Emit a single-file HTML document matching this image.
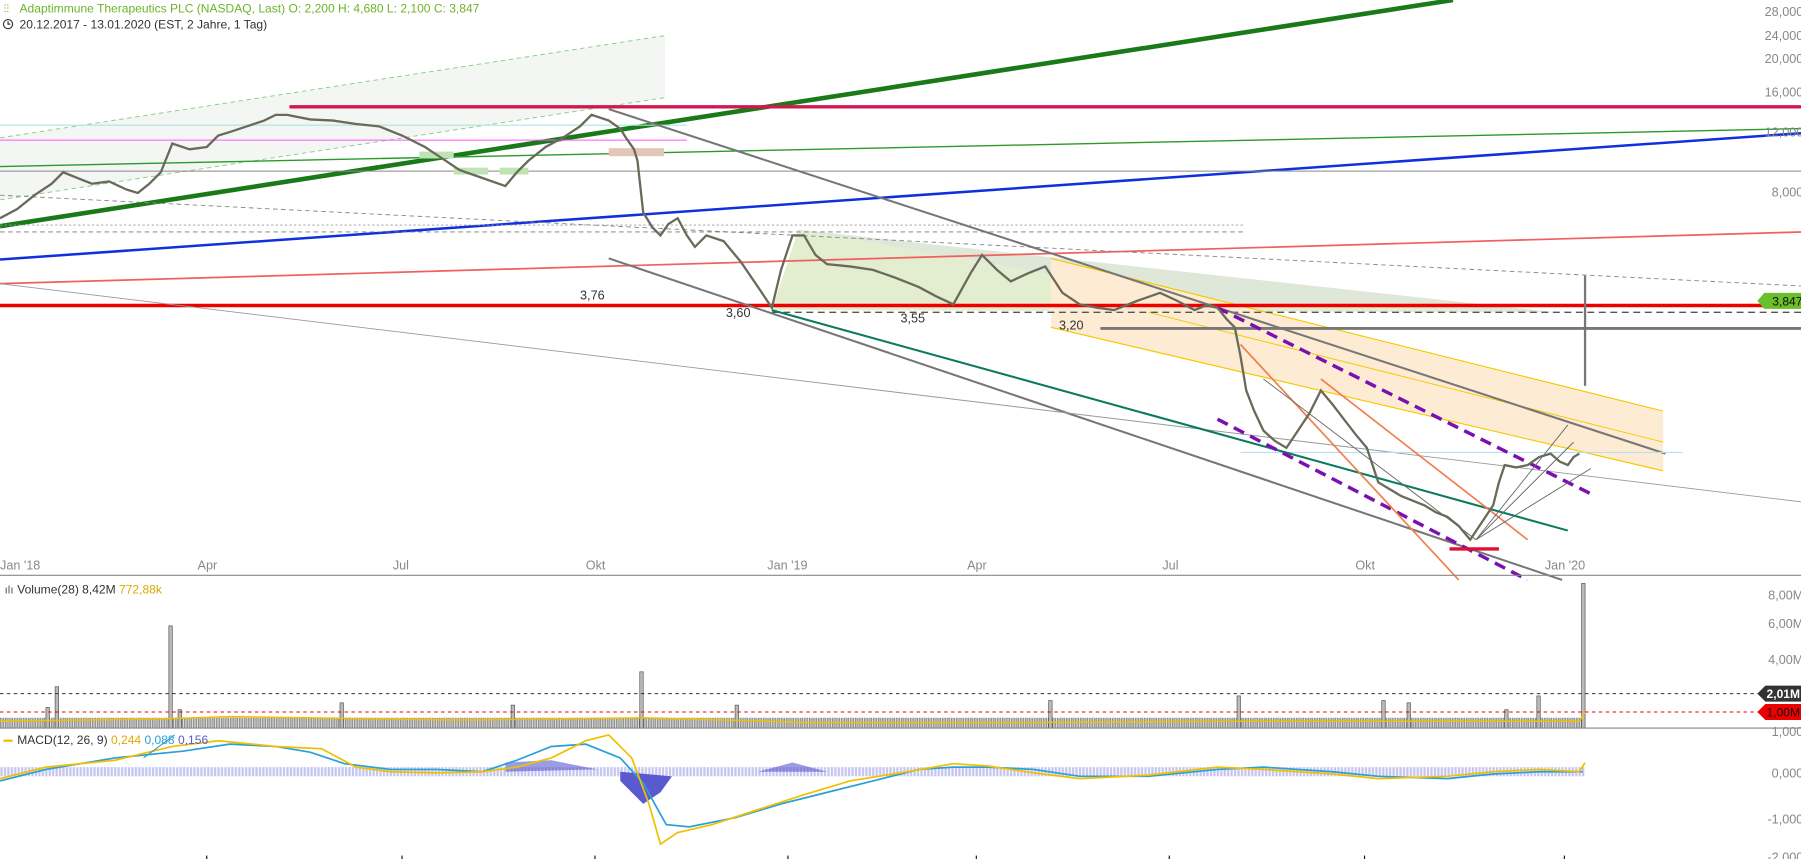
<!DOCTYPE html>
<html><head><meta charset="utf-8"><style>
html,body{margin:0;padding:0;background:#fff;overflow:hidden}
svg{display:block}
text{font-family:"Liberation Sans",Arial,sans-serif}
</style></head><body>
<svg width="1801" height="859" viewBox="0 0 1568 748" preserveAspectRatio="none" xmlns="http://www.w3.org/2000/svg">
<defs>
<pattern id="vb" width="4" height="20" patternUnits="userSpaceOnUse"><rect x="0.5" y="0" width="2.6" height="20" fill="#bbb" stroke="#555" stroke-width="0.5"/></pattern>
<pattern id="mh" width="3" height="20" patternUnits="userSpaceOnUse"><rect x="0.3" y="0" width="2" height="20" fill="#5a5ad0"/></pattern>
</defs>
<rect width="1568" height="748" fill="#fff"/>
<polygon points="0,120 579,31 579,85 0,174" fill="#f4f6f4"/>
<line x1="0" y1="120" x2="579" y2="31" stroke="#8c8" stroke-width="0.8" stroke-dasharray="4,3"/>
<line x1="0" y1="174" x2="579" y2="85" stroke="#8c8" stroke-width="0.8" stroke-dasharray="4,3"/>
<polygon points="672,270 695,200 1060,265 1355,272" fill="#e3eed0"/>
<polygon points="695,200 1355,272 1060,265" fill="#dfe8d8"/>
<polygon points="915,225 1448,358 1448,410 915,285" fill="#fdecd3"/>
<line x1="915" y1="225" x2="1448" y2="358" stroke="#f5c800" stroke-width="1"/>
<line x1="915" y1="285" x2="1448" y2="410" stroke="#f5c800" stroke-width="1"/>
<line x1="1000" y1="272" x2="1448" y2="385" stroke="#f5c800" stroke-width="0.8"/>
<line x1="0" y1="197" x2="1265" y2="0" stroke="#1a7a1a" stroke-width="4"/>
<line x1="252" y1="93" x2="1568" y2="93" stroke="#d0174f" stroke-width="3"/>
<line x1="0" y1="109" x2="598" y2="109" stroke="#a8e6e0" stroke-width="1"/>
<line x1="0" y1="122" x2="598" y2="122" stroke="#f5f" stroke-width="0.8"/>
<line x1="0" y1="145" x2="1568" y2="112" stroke="#2a9a2a" stroke-width="1.2"/>
<line x1="0" y1="226" x2="1568" y2="116" stroke="#1030e0" stroke-width="2.2"/>
<line x1="0" y1="149" x2="1568" y2="149" stroke="#888" stroke-width="0.8"/>
<line x1="0" y1="247" x2="1568" y2="202" stroke="#f06060" stroke-width="1.5"/>
<line x1="0" y1="170" x2="1568" y2="249" stroke="#888" stroke-width="0.8" stroke-dasharray="4,3"/>
<line x1="0" y1="196" x2="1083" y2="196" stroke="#999" stroke-width="0.8" stroke-dasharray="2,2"/>
<line x1="0" y1="202" x2="1083" y2="202" stroke="#777" stroke-width="0.8" stroke-dasharray="4,3"/>
<line x1="0" y1="266" x2="1568" y2="266" stroke="#e00" stroke-width="3"/>
<line x1="672" y1="272" x2="1568" y2="272" stroke="#555" stroke-width="1.2" stroke-dasharray="6,4"/>
<line x1="958" y1="286" x2="1568" y2="286" stroke="#777" stroke-width="2.5"/>
<line x1="530" y1="95" x2="1450" y2="395" stroke="#777" stroke-width="1.8"/>
<line x1="530" y1="225" x2="1360" y2="505" stroke="#777" stroke-width="1.8"/>
<line x1="0" y1="247" x2="1568" y2="437" stroke="#999" stroke-width="0.8"/>
<line x1="1080" y1="394" x2="1465" y2="394" stroke="#bde" stroke-width="1"/>
<line x1="672" y1="270" x2="1365" y2="462" stroke="#0b7a60" stroke-width="1.8"/>
<line x1="1060" y1="268" x2="1385" y2="430" stroke="#7a10b0" stroke-width="3" stroke-dasharray="10,6"/>
<line x1="1060" y1="365" x2="1330" y2="505" stroke="#7a10b0" stroke-width="3" stroke-dasharray="10,6"/>
<line x1="1150" y1="330" x2="1330" y2="470" stroke="#f08050" stroke-width="1.5"/>
<line x1="1080" y1="300" x2="1270" y2="505" stroke="#f08050" stroke-width="1.5"/>
<line x1="1100" y1="330" x2="1285" y2="470" stroke="#666" stroke-width="0.8"/>
<line x1="1285" y1="470" x2="1365" y2="370" stroke="#666" stroke-width="0.8"/>
<line x1="1285" y1="470" x2="1370" y2="385" stroke="#666" stroke-width="0.8"/>
<line x1="1285" y1="470" x2="1385" y2="408" stroke="#666" stroke-width="0.8"/>
<line x1="1262" y1="478" x2="1305" y2="478" stroke="#e01030" stroke-width="3"/>
<rect x="530" y="129" width="48" height="7" fill="#e3c6b8"/>
<rect x="365" y="132" width="30" height="6" fill="#bfe3b5"/>
<rect x="395" y="146" width="30" height="6" fill="#bfe3b5"/>
<rect x="435" y="146" width="25" height="6" fill="#bfe3b5"/>
<polyline fill="none" stroke="#6a6a5a" stroke-width="2" points="0,190 15,182 30,170 45,160 55,150 70,156 80,160 95,158 110,165 120,168 130,160 140,150 150,125 165,130 180,128 190,118 200,115 215,110 230,105 240,100 250,100 270,104 290,105 310,108 330,110 350,118 370,128 385,138 400,148 420,155 440,162 450,150 460,140 475,128 490,120 505,110 515,100 530,105 540,112 545,120 552,130 555,140 560,185 568,198 575,205 582,195 590,190 598,205 605,215 615,205 630,210 645,228 660,250 668,262 672,268 680,235 690,205 700,205 710,222 720,230 740,232 760,235 780,242 800,250 815,258 830,265 845,238 855,222 868,235 880,245 895,238 910,232 925,255 940,265 955,268 970,270 990,262 1010,255 1025,262 1040,270 1050,266 1060,268 1068,278 1075,285 1080,310 1085,340 1092,358 1100,375 1110,384 1120,390 1130,375 1140,360 1150,340 1160,352 1170,365 1180,378 1190,390 1195,405 1200,420 1210,426 1220,432 1230,436 1240,440 1250,446 1260,450 1270,458 1280,470 1290,455 1300,440 1305,420 1310,405 1320,407 1330,405 1340,398 1350,395 1358,402 1365,405 1370,398 1375,395"/>
<line x1="1380" y1="240" x2="1380" y2="336" stroke="#777" stroke-width="2"/>
<text x="505" y="261" font-size="11" fill="#333">3,76</text>
<text x="632" y="276" font-size="11" fill="#333">3,60</text>
<text x="784" y="281" font-size="11" fill="#333">3,55</text>
<text x="922" y="287" font-size="11" fill="#333">3,20</text>
<text x="3" y="11" font-size="10" fill="#6bb52a">⫶⫶</text>
<text x="17" y="11" font-size="10.5" fill="#6bb52a">Adaptimmune Therapeutics PLC (NASDAQ, Last)  O: 2,200  H: 4,680  L: 2,100  C: 3,847</text>
<circle cx="7" cy="21" r="4" fill="none" stroke="#333" stroke-width="1"/><path d="M7,18.5V21H9" stroke="#333" fill="none" stroke-width="1"/>
<text x="17" y="25" font-size="10.5" fill="#333">20.12.2017 - 13.01.2020   (EST, 2 Jahre, 1 Tag)</text>
<g font-size="11" fill="#888" text-anchor="end">
<text x="1570" y="14">28,000</text><text x="1570" y="35">24,000</text><text x="1570" y="55">20,000</text>
<text x="1570" y="84">16,000</text><text x="1570" y="119">12,000</text><text x="1570" y="171">8,000</text>
<text x="1570" y="522">8,00M</text><text x="1570" y="547">6,00M</text><text x="1570" y="578">4,00M</text>
<text x="1570" y="641">1,000</text><text x="1570" y="677">0,000</text><text x="1570" y="717">-1,000</text><text x="1570" y="750">-2,000</text>
</g>
<polygon points="1530,262 1536,255 1568,255 1568,269 1536,269" fill="#6abf2a"/>
<text x="1543" y="266" font-size="10.5" fill="#111">3,847</text>
<g font-size="11" fill="#888">
<text x="0" y="496">Jan '18</text><text x="172" y="496">Apr</text><text x="342" y="496">Jul</text><text x="510" y="496">Okt</text>
<text x="668" y="496">Jan '19</text><text x="842" y="496">Apr</text><text x="1012" y="496">Jul</text><text x="1180" y="496">Okt</text><text x="1345" y="496">Jan '20</text>
</g>
<line x1="0" y1="501" x2="1568" y2="501" stroke="#888" stroke-width="1"/>
<rect x="0" y="625" width="1380" height="9" fill="url(#vb)"/>
<g fill="#bbb" stroke="#555" stroke-width="0.6">
<rect x="48" y="598" width="3" height="36"/><rect x="147" y="545" width="3" height="89"/><rect x="557" y="585" width="3" height="49"/>
<rect x="1077" y="606" width="3" height="28"/><rect x="1338" y="606" width="3" height="28"/><rect x="913" y="610" width="3" height="24"/>
<rect x="296" y="612" width="3" height="22"/><rect x="1203" y="610" width="3" height="24"/><rect x="1377" y="508" width="3" height="126"/>
<rect x="40" y="616" width="3" height="18"/><rect x="155" y="618" width="3" height="16"/><rect x="445" y="614" width="3" height="20"/><rect x="640" y="614" width="3" height="20"/><rect x="1225" y="612" width="3" height="22"/><rect x="1310" y="618" width="3" height="16"/>
</g>
<polyline fill="none" stroke="#f0c000" stroke-width="1.3" points="0,628 140,626 200,624 400,627 560,625 700,629 900,629 1080,628 1300,628 1375,628 1380,620"/>
<line x1="0" y1="604" x2="1535" y2="604" stroke="#333" stroke-width="0.8" stroke-dasharray="3,3"/>
<line x1="0" y1="620" x2="1535" y2="620" stroke="#e00" stroke-width="0.8" stroke-dasharray="3,3"/>
<polygon points="1530,604 1537,597 1568,597 1568,611 1537,611" fill="#333"/>
<text x="1538" y="608" font-size="10.5" font-weight="bold" fill="#fff">2,01M</text>
<polygon points="1530,620 1537,613 1568,613 1568,627 1537,627" fill="#e00"/>
<text x="1538" y="624" font-size="10.5" fill="#111">1,00M</text>
<line x1="0" y1="634" x2="1568" y2="634" stroke="#888" stroke-width="1"/>
<text x="4" y="517" font-size="10" fill="#555">ılı</text>
<text x="15" y="517" font-size="10.5" fill="#333">Volume(28) 8,42M <tspan fill="#e0a800">772,88k</tspan></text>
<rect x="0" y="668" width="1380" height="8" fill="url(#mh)" opacity="0.35"/>
<path d="M440,672 L440,664 480,662 520,670 Z" fill="#5a5ad0" opacity="0.6"/>
<path d="M540,672 L540,680 560,700 575,690 585,676 Z" fill="#5a5ad0"/>
<path d="M660,672 L690,664 720,672 Z" fill="#5a5ad0" opacity="0.6"/>
<polyline fill="none" stroke="#29a0d8" stroke-width="1.5" points="0,680 40,670 100,660 160,654 200,648 240,650 270,655 300,665 340,670 380,670 420,672 450,662 480,650 510,648 540,660 560,682 580,718 600,720 640,712 680,700 720,690 760,680 800,670 830,668 860,668 900,670 940,676 1000,676 1060,670 1100,668 1160,672 1200,676 1260,678 1300,674 1340,672 1378,672"/>
<polyline fill="none" stroke="#f0c000" stroke-width="1.5" points="0,678 40,668 100,662 150,650 190,645 240,650 280,652 310,668 340,672 380,673 420,672 450,668 480,660 510,645 530,640 550,660 565,700 575,735 590,725 620,718 660,705 700,692 740,680 790,672 830,665 860,667 900,673 940,678 1000,675 1060,668 1100,670 1160,674 1200,678 1260,676 1300,672 1340,670 1375,672 1380,664"/>
<line x1="125" y1="660" x2="152" y2="640" stroke="#29a0d8" stroke-width="1"/>
<rect x="3" y="644" width="8" height="2" fill="#f0c000"/>
<text x="15" y="648" font-size="10.5" fill="#333">MACD(12, 26, 9) <tspan fill="#e0a800">0,244</tspan> <tspan fill="#29a0d8">0,088</tspan> <tspan fill="#5a5ad0">0,156</tspan></text>
<g stroke="#111" stroke-width="1"><line x1="180" y1="745" x2="180" y2="748"/><line x1="350" y1="745" x2="350" y2="748"/><line x1="518" y1="745" x2="518" y2="748"/><line x1="686" y1="745" x2="686" y2="748"/><line x1="850" y1="745" x2="850" y2="748"/><line x1="1018" y1="745" x2="1018" y2="748"/><line x1="1188" y1="745" x2="1188" y2="748"/><line x1="1362" y1="745" x2="1362" y2="748"/></g>
</svg>
</body></html>
